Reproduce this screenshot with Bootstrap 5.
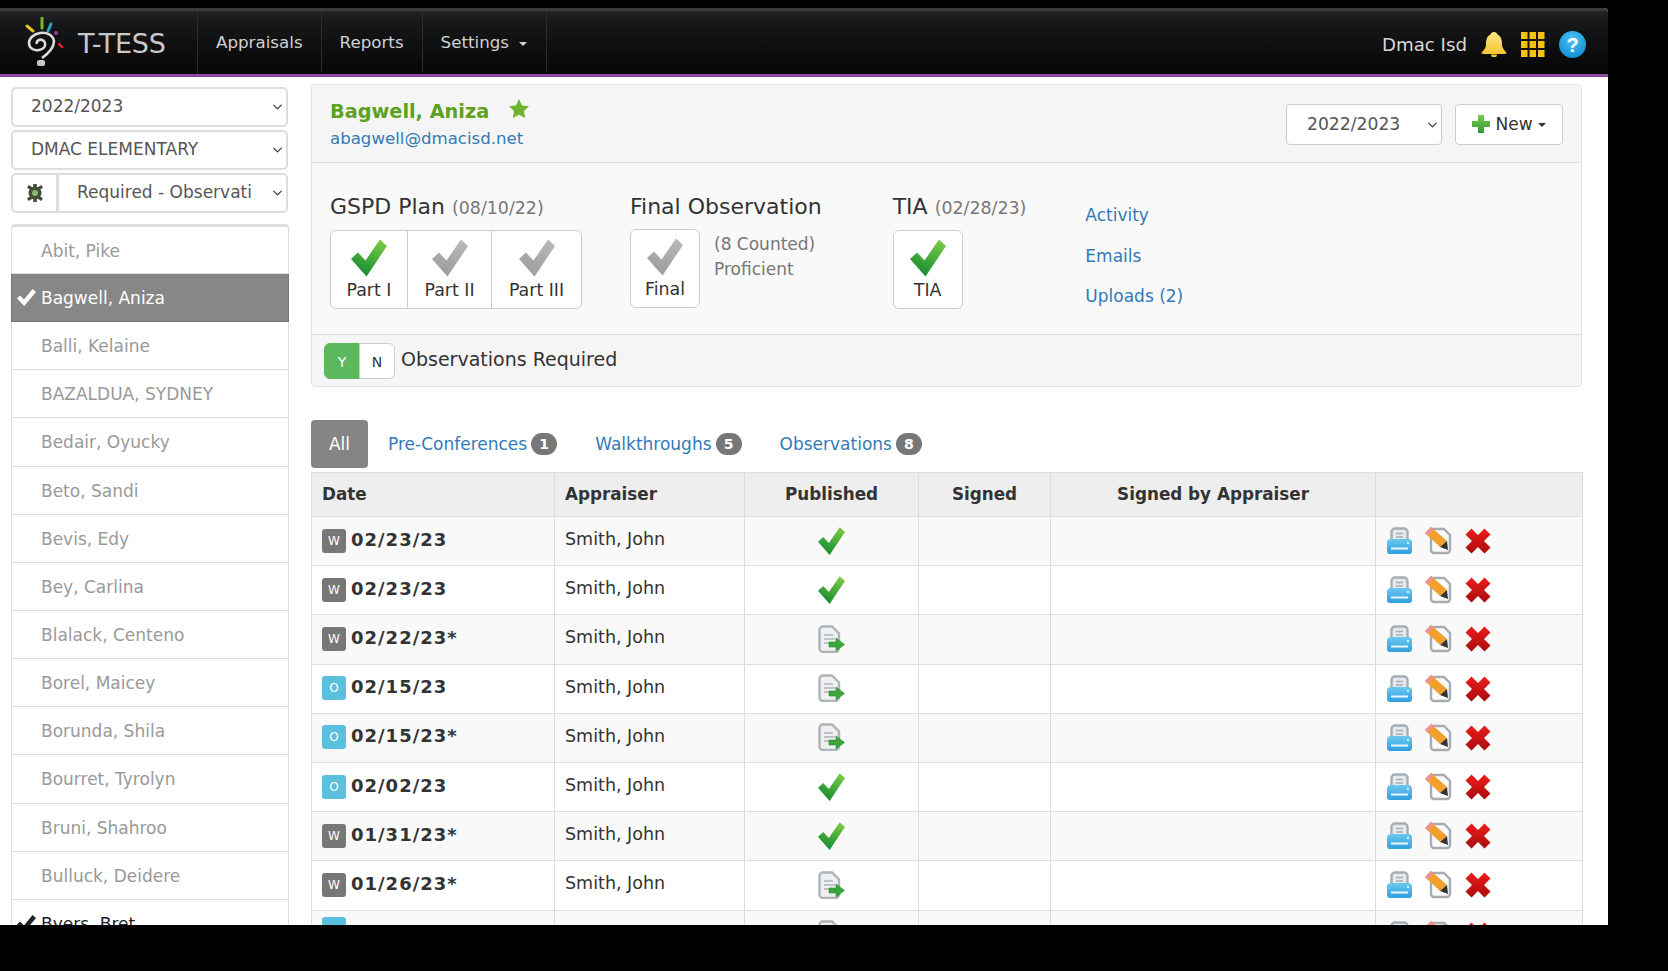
<!DOCTYPE html>
<html lang="en">
<head>
<meta charset="utf-8">
<title>T-TESS</title>
<link rel="stylesheet" href="https://cdn.jsdelivr.net/npm/bootstrap@5.3.0/dist/css/bootstrap.min.css">
<style>
html,body{height:100%;overflow:hidden}
body{background:#000;font-family:"DejaVu Sans",Verdana,sans-serif;color:#333;font-size:17px}
.tt-win{width:1608px;height:917px;margin-top:8px;background:#fff;overflow:hidden;border-top-right-radius:4px}
.tt-nav{height:69px;padding:0;background:linear-gradient(#222425 0,#161718 20%,#060606 100%);border-top:3px solid #3a3c3c;border-bottom:3px solid #8a4aa3;align-items:stretch;flex-wrap:nowrap}
.tt-brand{width:197px;margin:0;padding:0 0 0 21px;gap:14px;color:#c9c9c9;font-size:27px;letter-spacing:-.25px;line-height:1}
.tt-brand:hover{color:#c9c9c9}
.tt-brand span{padding-top:2px}
.tt-navlist{flex-direction:row;border-left:1px solid #2c2c2c}
.tt-navlist .nav-link{height:61px;padding:0 18px;line-height:62px;color:#d2d2d2;font-size:16.7px;border-right:1px solid #2c2c2c}
.tt-navlist .nav-item:last-child .nav-link{padding-right:19px}
.tt-caret{display:inline-block;margin-left:5px;vertical-align:middle;border-top:4px solid #d2d2d2;border-left:4px solid transparent;border-right:4px solid transparent}
.tt-user{gap:14px;padding-right:22px;padding-top:3px;color:#d8d8d8;font-size:18.2px}
.tt-user span{padding-top:2px}
.tt-main{gap:22px;padding:10px 0 0 11px;align-items:flex-start}
.tt-side{width:278px;flex:none}
.tt-side .form-select{height:40px;margin-bottom:3px;padding:0 34px 0 18px;font-size:17px;color:#555;border:2px solid #ddd;border-radius:5px;background-position:right 2px center;background-size:13px 10px;width:277px}
.tt-side .input-group{width:277px;margin-bottom:11px;flex-wrap:nowrap}
.tt-side .input-group .form-select{width:auto;margin-bottom:0;border-radius:0 5px 5px 0;padding-left:18px}
.tt-side .input-group-text{width:47px;flex:none;height:40px;padding:0;justify-content:center;background:#fff;border:2px solid #ddd;border-radius:5px 0 0 5px}
.tt-students{border:0;border-radius:4px 4px 0 0}
.tt-students .list-group-item{height:48.15px;padding:0 0 0 29px;line-height:49px;color:#999;font-size:17px;border:1px solid #ddd;white-space:nowrap;position:relative;margin-top:0}
.tt-students .list-group-item+.list-group-item{border-top-width:0}
.tt-students .list-group-item:first-child{border-top:3px solid #ddd;height:50px}
.tt-students .tt-picked{background:#878787;color:#fff;border-color:#777;border-top:2px solid #6f6f6f}
.tt-students .tt-done{color:#222}
.tt-tick{position:absolute;left:5px;top:15px;width:19px;height:17px;fill:#fff}
.tt-done .tt-tick{fill:#222}
.tt-content{width:1271px;flex:none}
.tt-panel{border:1px solid #e3e3e3;border-radius:4px;background:#f9f9f9;margin-bottom:33px;margin-top:-3px}
.tt-panel .card-header{height:78px;padding:2px 18px 0;background:#f5f5f5;border-bottom:1px solid #ddd;align-items:center}
.tt-name{font-size:19.3px;font-weight:700;color:#5ba122;line-height:28px}
.tt-name svg{margin-left:13px;width:20px;height:20px;vertical-align:-1px;fill:#6cb52d}
.tt-mail{font-size:16.6px;line-height:26px;display:block}
a{color:#337ab7;text-decoration:none}
.tt-year{width:156px;height:41px;margin-right:13px;padding:0 36px 0 20px;font-size:17.2px;color:#555;border:1px solid #ccc;border-radius:4px;background-position:right 2px center;background-size:13px 10px}
.tt-new{width:108px;height:41px;padding:0;font-size:17px;color:#333;background:#fff;border:1px solid #ccc;border-radius:4px}
.tt-new .tt-caret{border-top-color:#333;margin-left:5px}
.tt-new svg{width:18px;height:18px;vertical-align:-3px;margin-right:5px}
.tt-panel .card-body{height:171px;padding:31px 18px 0;gap:48px}
.tt-head{font-size:22px;line-height:26px;margin:0 0 9px;font-weight:400;color:#333;white-space:nowrap}
.tt-head small{font-size:17.4px;color:#777}
.tt-steps .btn{height:79px;padding:8px 0 0;background:#fff;border:1px solid #ccc;color:#333;font-size:17.4px;line-height:24px;display:flex;flex-direction:column;align-items:center;flex:none}
.tt-steps svg{width:36px;height:38px;margin-bottom:1px}
.tt-w78{width:78px}.tt-w85{width:85px}.tt-w91{width:91px}.tt-w70{width:70px}
.tt-sub{font-size:17px;line-height:24.5px;color:#777;margin:3px 0 0 14px}
.tt-tia{margin-left:23px}
.tt-links{gap:15px;margin:9px 0 0 11px;line-height:25.5px;font-size:17px}
.tt-panel .card-footer{height:52px;padding:0 12px;background:#f5f5f5;border-top:1px solid #ddd;gap:6px;align-items:center;font-size:19px}
.tt-panel .card-footer span{margin-bottom:2px}
.tt-yn .btn{width:36px;height:36px;padding:0;font-size:14px;line-height:36px;border:1px solid #ccc;background:#fff;color:#333}
.tt-yn .tt-on{background:#5cb85c;border-color:#5cb85c;color:#fff}
.tt-tabs{gap:0;height:52px;align-items:flex-start}
.tt-tabs .nav-link{height:48px;padding:0;line-height:48px;font-size:17px;color:#337ab7;margin-right:38px;white-space:nowrap}
.tt-tabs .nav-link.active{width:57px;margin-right:20px;background:#858585;color:#fff;text-align:center;border-radius:4px}
.tt-count{display:inline-block;min-width:26px;height:22px;margin-left:4px;padding:0;border-radius:11px;background:#777;color:#fff;font-size:14px;font-weight:700;line-height:22px;text-align:center;vertical-align:1px}
.tt-grid{table-layout:fixed;width:1271px;margin:0;border-color:#ddd;--bs-table-striped-bg:#f9f9f9;--bs-table-color:#333;--bs-table-striped-color:#333}
.tt-grid th{height:44px;padding:0 10px;background:#eee;font-size:16.8px;vertical-align:middle;color:#333}
.tt-grid td{height:49.2px;padding:0 10px;font-size:17.5px;vertical-align:middle}
.tt-grid td:nth-child(-n+2){padding-bottom:4px}
.tt-c1{width:243px}.tt-c2{width:190px}.tt-c3{width:174px}.tt-c4{width:132px}.tt-c5{width:325px}.tt-c6{width:207px}
.tt-grid td.tt-date{font-size:18px;font-weight:700;letter-spacing:1px;white-space:nowrap}
.tt-kind{display:inline-block;width:24px;height:24px;margin-right:5px;border-radius:3px;color:#fff;font-size:12px;line-height:24px;text-align:center;font-weight:400;letter-spacing:0;vertical-align:1px}
.tt-w{background:#777}.tt-o{background:#5bc0de}
.tt-pub{width:27px;height:28px;display:block;margin:-1px auto 0}
.tt-acts{gap:12px;align-items:center}
.tt-acts svg{width:27px;height:28px;flex:none}
.tt-acts svg:last-child{width:28px}
</style>
</head>
<body>
<svg width="0" height="0" class="position-absolute">
<defs>
<linearGradient id="gGreen" x1="0.8" y1="0" x2="0.35" y2="1"><stop offset="0" stop-color="#7ccc45"/><stop offset="1" stop-color="#138a30"/></linearGradient>
<linearGradient id="gGray" x1="0.8" y1="0" x2="0.35" y2="1"><stop offset="0" stop-color="#b9b9b9"/><stop offset="1" stop-color="#9c9c9c"/></linearGradient>
<linearGradient id="gRed" x1="0" y1="0" x2="0" y2="1"><stop offset="0" stop-color="#ee1c1c"/><stop offset="1" stop-color="#a80d0d"/></linearGradient>
<linearGradient id="gBlue" x1="0" y1="0" x2="0" y2="1"><stop offset="0" stop-color="#6cc8f2"/><stop offset="1" stop-color="#2f9fdc"/></linearGradient>
<linearGradient id="gPlus" x1="0" y1="0" x2="0" y2="1"><stop offset="0" stop-color="#7cc84a"/><stop offset="1" stop-color="#2f9a3a"/></linearGradient>
<linearGradient id="gBell" x1="0" y1="0" x2="0" y2="1"><stop offset="0" stop-color="#ffe88a"/><stop offset="1" stop-color="#f2c430"/></linearGradient>
<radialGradient id="gHelp" cx=".5" cy=".3" r=".8"><stop offset="0" stop-color="#4fc3f5"/><stop offset="1" stop-color="#0a86cf"/></radialGradient>
<symbol id="iCheckG" viewBox="0 0 36 37"><path fill="url(#gGreen)" d="M0 19.500 7 13l7.500 8L29 0l7 6.500L15.500 37z"/></symbol>
<symbol id="iCheckS" viewBox="0 0 36 37"><path fill="url(#gGray)" d="M0 19.500 7 13l7.500 8L29 0l7 6.500L15.500 37z"/></symbol>
<symbol id="iTick" viewBox="0 0 19 17"><path d="M0 9.500 3 6.500 7 10.500 15.500 0 19 3 7.200 17z"/></symbol>
<symbol id="iDoc" viewBox="0 0 27 28">
<path d="M1.500 5a3.500 3.500 0 0 1 3.500-3.500h9l7 7v15a3.500 3.500 0 0 1-3.500 3.500H5a3.500 3.500 0 0 1-3.500-3.500z" fill="#eef0f1" stroke="#aeb4b9" stroke-width="2.400"/>
<path d="M6 10h9M6 14h11M6 18h6" stroke="#aeb4b9" stroke-width="1.600"/>
<path d="M11 17h7v-4l8.500 6.500-8.500 6.500v-4h-7z" fill="#3aa53a" stroke="#2d8a30" stroke-width=".6"/></symbol>
<symbol id="iPrint" viewBox="0 0 27 28">
<rect x="5.500" y="1.500" width="16" height="14" rx="3.500" fill="#e6e9eb" stroke="#a5aeb4" stroke-width="2.400"/>
<path d="M10 6.500h7M10 10h7" stroke="#a5aeb4" stroke-width="1.400"/>
<path d="M1 16a4 4 0 0 1 4-4h17a4 4 0 0 1 4 4v8a3 3 0 0 1-3 3H4a3 3 0 0 1-3-3z" fill="url(#gBlue)"/>
<path d="M5 21.500h17" stroke="#e8f6fd" stroke-width="2"/><circle cx="22" cy="16" r="1" fill="#fff"/></symbol>
<symbol id="iEdit" viewBox="0 0 27 28">
<path d="M6 2h13l6 6v15a3 3 0 0 1-3 3H9a3 3 0 0 1-3-3z" fill="#fafafa" stroke="#a6adb2" stroke-width="2.400"/>
<path d="M0 6 6 0 22 14 15 20z" fill="#f2a02c"/><path d="M0 6 6 0 8.500 2.500 2.500 8.500z" fill="#ef8f9c"/>
<path d="M15 20 22 14 23 23z" fill="#333"/></symbol>
<symbol id="iX" viewBox="0 0 27 28"><path fill="url(#gRed)" d="M1 7.500 7 1.500l6.500 6.500L20 1.500l6 6L19.500 14l6.500 6.500-6 6L13.500 20 7 26.500l-6-6L7.500 14z"/></symbol>
</defs>
</svg>

<div class="tt-win">
<nav class="navbar tt-nav justify-content-between">
  <div class="d-flex">
    <a class="navbar-brand d-flex align-items-center tt-brand" href="#">
      <svg width="43" height="52" viewBox="0 0 43 52" aria-hidden="true">
        <path d="M21 1v10" stroke="#7fb52e" stroke-width="3" stroke-linecap="round"/>
        <path d="M6 9l6 5" stroke="#e8c31f" stroke-width="3" stroke-linecap="round"/>
        <path d="M30 7l-3 7" stroke="#2f9fc4" stroke-width="3" stroke-linecap="round"/>
        <circle cx="35" cy="16" r="2" fill="#9a3c9e"/><path d="M38 27l3 3" stroke="#d8242e" stroke-width="2.500" stroke-linecap="round"/>
        <path d="M21 41c7-5 12-11 12-17-1-6-7-9-14-8-6 1-11 5-11 10 0 5 5 8 10 7 5-1 7-4 6-7-1-3-4-4-6-3-2 1-3 2-2 4" fill="none" stroke="#dcdcdc" stroke-width="2.600"/>
        <rect x="16" y="43" width="8" height="6" rx="2" fill="#c9c9c9"/>
      </svg>
      <span>T-TESS</span>
    </a>
    <ul class="navbar-nav tt-navlist">
      <li class="nav-item"><a class="nav-link" href="#">Appraisals</a></li>
      <li class="nav-item"><a class="nav-link" href="#">Reports</a></li>
      <li class="nav-item"><a class="nav-link" href="#">Settings <b class="tt-caret"></b></a></li>
    </ul>
  </div>
  <div class="d-flex align-items-center tt-user">
    <span>Dmac Isd</span>
    <svg width="26" height="26" viewBox="0 0 26 26" aria-hidden="true"><path d="M13 1c2 0 3 1 3.500 2.500C20 5 21 9 21 13c0 4 2 6 4 8 1 1 0 2-1 2H2c-1 0-2-1-1-2 2-2 4-4 4-8 0-4 1-8 4.500-9.500C10 2 11 1 13 1z" fill="url(#gBell)"/><path d="M10 23.500h6a3 3 0 0 1-6 0z" fill="#f2c430"/></svg>
    <svg width="24" height="25" viewBox="0 0 24 25" aria-hidden="true"><g fill="#f6c20e"><rect width="6.500" height="7"/><rect x="8.500" width="6.500" height="7"/><rect x="17" width="6.500" height="7"/><rect y="9" width="6.500" height="7"/><rect x="8.500" y="9" width="6.500" height="7"/><rect x="17" y="9" width="6.500" height="7"/><rect y="18" width="6.500" height="7"/><rect x="8.500" y="18" width="6.500" height="7"/><rect x="17" y="18" width="6.500" height="7"/></g></svg>
    <svg width="27" height="27" viewBox="0 0 27 27" aria-hidden="true"><circle cx="13.500" cy="13.500" r="13.500" fill="url(#gHelp)"/><text x="13.500" y="20.500" text-anchor="middle" font-family="Liberation Sans, sans-serif" font-size="20" font-weight="700" fill="#fff">?</text></svg>
  </div>
</nav>

<div class="d-flex tt-main">
  <aside class="tt-side">
    <select class="form-select"><option>2022/2023</option></select>
    <select class="form-select"><option>DMAC ELEMENTARY</option></select>
    <div class="input-group">
      <span class="input-group-text">
        <svg width="18" height="18" viewBox="0 0 18 18" aria-hidden="true"><g fill="#3f4f3a"><circle cx="9" cy="9" r="6.500"/><path d="M7.200 0h3.600v4H7.200zM7.200 14h3.600v4H7.200zM1 3.800 2.800 1l3.500 2.200-1.800 2.800zM11.700 14.800l1.800-2.800 3.500 2.200-1.800 2.800zM1 14.200l3.500-2.200 1.800 2.800L2.800 17zM11.700 3.200 15.200 1 17 3.800 13.500 6z"/></g><circle cx="9" cy="9" r="3" fill="#8fb86a"/></svg>
      </span>
      <select class="form-select"><option>Required - Observations</option></select>
    </div>
    <ul class="list-group tt-students">
      <li class="list-group-item">Abit, Pike</li>
      <li class="list-group-item tt-picked"><svg class="tt-tick"><use href="#iTick"/></svg>Bagwell, Aniza</li>
      <li class="list-group-item">Balli, Kelaine</li>
      <li class="list-group-item">BAZALDUA, SYDNEY</li>
      <li class="list-group-item">Bedair, Oyucky</li>
      <li class="list-group-item">Beto, Sandi</li>
      <li class="list-group-item">Bevis, Edy</li>
      <li class="list-group-item">Bey, Carlina</li>
      <li class="list-group-item">Blalack, Centeno</li>
      <li class="list-group-item">Borel, Maicey</li>
      <li class="list-group-item">Borunda, Shila</li>
      <li class="list-group-item">Bourret, Tyrolyn</li>
      <li class="list-group-item">Bruni, Shahroo</li>
      <li class="list-group-item">Bulluck, Deidere</li>
      <li class="list-group-item tt-done"><svg class="tt-tick"><use href="#iTick"/></svg>Byers, Bret</li>
    </ul>
  </aside>

  <main class="tt-content">
    <section class="card tt-panel">
      <div class="card-header d-flex justify-content-between">
        <div>
          <div class="tt-name">Bagwell, Aniza <svg viewBox="0 0 20 20" aria-hidden="true"><path d="M10 0l3 6.400 7 .9-5.100 4.800 1.300 7L10 15.700 3.800 19.100l1.300-7L0 7.300l7-.9z"/></svg></div>
          <a class="tt-mail" href="#">abagwell@dmacisd.net</a>
        </div>
        <div class="d-flex">
          <select class="form-select tt-year"><option>2022/2023</option></select>
          <button class="btn tt-new" type="button"><svg viewBox="0 0 18 18" aria-hidden="true"><path fill="url(#gPlus)" d="M6 0h6v6h6v6h-6v6H6v-6H0V6h6z"/></svg>New<b class="tt-caret"></b></button>
        </div>
      </div>
      <div class="card-body d-flex">
        <div>
          <h3 class="tt-head">GSPD Plan <small>(08/10/22)</small></h3>
          <div class="btn-group tt-steps">
            <button class="btn tt-w78" type="button"><svg><use href="#iCheckG"/></svg>Part I</button>
            <button class="btn tt-w85" type="button"><svg><use href="#iCheckS"/></svg>Part II</button>
            <button class="btn tt-w91" type="button"><svg><use href="#iCheckS"/></svg>Part III</button>
          </div>
        </div>
        <div>
          <h3 class="tt-head">Final Observation</h3>
          <div class="d-flex">
            <div class="btn-group tt-steps"><button class="btn tt-w70" type="button"><svg><use href="#iCheckS"/></svg>Final</button></div>
            <div class="tt-sub">(8 Counted)<br>Proficient</div>
          </div>
        </div>
        <div class="tt-tia">
          <h3 class="tt-head">TIA <small>(02/28/23)</small></h3>
          <div class="btn-group tt-steps"><button class="btn tt-w70" type="button"><svg><use href="#iCheckG"/></svg>TIA</button></div>
        </div>
        <div class="d-flex flex-column tt-links">
          <a href="#">Activity</a>
          <a href="#">Emails</a>
          <a href="#">Uploads (2)</a>
        </div>
      </div>
      <div class="card-footer d-flex">
        <div class="btn-group tt-yn"><button class="btn tt-on" type="button">Y</button><button class="btn" type="button">N</button></div>
        <span>Observations Required</span>
      </div>
    </section>

    <ul class="nav tt-tabs">
      <li class="nav-item"><a class="nav-link active" href="#">All</a></li>
      <li class="nav-item"><a class="nav-link" href="#">Pre-Conferences<span class="tt-count">1</span></a></li>
      <li class="nav-item"><a class="nav-link" href="#">Walkthroughs<span class="tt-count">5</span></a></li>
      <li class="nav-item"><a class="nav-link" href="#">Observations<span class="tt-count">8</span></a></li>
    </ul>

    <table class="table table-bordered table-striped tt-grid">
      <colgroup><col class="tt-c1"><col class="tt-c2"><col class="tt-c3"><col class="tt-c4"><col class="tt-c5"><col class="tt-c6"></colgroup>
      <thead><tr><th>Date</th><th>Appraiser</th><th class="text-center">Published</th><th class="text-center">Signed</th><th class="text-center">Signed by Appraiser</th><th></th></tr></thead>
      <tbody>
        <tr><td class="tt-date"><span class="tt-kind tt-w">W</span>02/23/23</td><td>Smith, John</td><td><svg class="tt-pub"><use href="#iCheckG"/></svg></td><td></td><td></td><td><div class="d-flex tt-acts"><svg><use href="#iPrint"/></svg><svg><use href="#iEdit"/></svg><svg><use href="#iX"/></svg></div></td></tr>
        <tr><td class="tt-date"><span class="tt-kind tt-w">W</span>02/23/23</td><td>Smith, John</td><td><svg class="tt-pub"><use href="#iCheckG"/></svg></td><td></td><td></td><td><div class="d-flex tt-acts"><svg><use href="#iPrint"/></svg><svg><use href="#iEdit"/></svg><svg><use href="#iX"/></svg></div></td></tr>
        <tr><td class="tt-date"><span class="tt-kind tt-w">W</span>02/22/23*</td><td>Smith, John</td><td><svg class="tt-pub"><use href="#iDoc"/></svg></td><td></td><td></td><td><div class="d-flex tt-acts"><svg><use href="#iPrint"/></svg><svg><use href="#iEdit"/></svg><svg><use href="#iX"/></svg></div></td></tr>
        <tr><td class="tt-date"><span class="tt-kind tt-o">O</span>02/15/23</td><td>Smith, John</td><td><svg class="tt-pub"><use href="#iDoc"/></svg></td><td></td><td></td><td><div class="d-flex tt-acts"><svg><use href="#iPrint"/></svg><svg><use href="#iEdit"/></svg><svg><use href="#iX"/></svg></div></td></tr>
        <tr><td class="tt-date"><span class="tt-kind tt-o">O</span>02/15/23*</td><td>Smith, John</td><td><svg class="tt-pub"><use href="#iDoc"/></svg></td><td></td><td></td><td><div class="d-flex tt-acts"><svg><use href="#iPrint"/></svg><svg><use href="#iEdit"/></svg><svg><use href="#iX"/></svg></div></td></tr>
        <tr><td class="tt-date"><span class="tt-kind tt-o">O</span>02/02/23</td><td>Smith, John</td><td><svg class="tt-pub"><use href="#iCheckG"/></svg></td><td></td><td></td><td><div class="d-flex tt-acts"><svg><use href="#iPrint"/></svg><svg><use href="#iEdit"/></svg><svg><use href="#iX"/></svg></div></td></tr>
        <tr><td class="tt-date"><span class="tt-kind tt-w">W</span>01/31/23*</td><td>Smith, John</td><td><svg class="tt-pub"><use href="#iCheckG"/></svg></td><td></td><td></td><td><div class="d-flex tt-acts"><svg><use href="#iPrint"/></svg><svg><use href="#iEdit"/></svg><svg><use href="#iX"/></svg></div></td></tr>
        <tr><td class="tt-date"><span class="tt-kind tt-w">W</span>01/26/23*</td><td>Smith, John</td><td><svg class="tt-pub"><use href="#iDoc"/></svg></td><td></td><td></td><td><div class="d-flex tt-acts"><svg><use href="#iPrint"/></svg><svg><use href="#iEdit"/></svg><svg><use href="#iX"/></svg></div></td></tr>
        <tr><td class="tt-date"><span class="tt-kind tt-o"></span></td><td></td><td><svg class="tt-pub"><use href="#iDoc"/></svg></td><td></td><td></td><td><div class="d-flex tt-acts"><svg><use href="#iPrint"/></svg><svg><use href="#iEdit"/></svg><svg><use href="#iX"/></svg></div></td></tr>
      </tbody>
    </table>
  </main>
</div>
</div>
<script src="https://cdn.jsdelivr.net/npm/bootstrap@5.3.0/dist/js/bootstrap.bundle.min.js"></script>
</body>
</html>
